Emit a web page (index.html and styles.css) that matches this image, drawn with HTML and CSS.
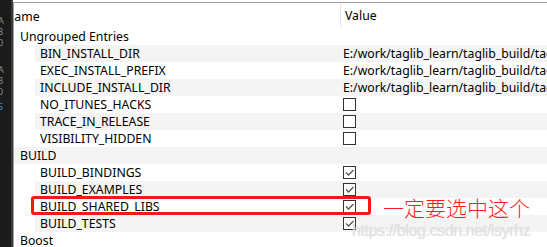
FILE: index.html
```html
<!DOCTYPE html>
<html>
<head>
<meta charset="utf-8">
<link rel="stylesheet" href="styles.css">
</head>
<body>
<div class="app">
  <div class="strip">
    <span class="sg">A</span><span class="sg">8</span><span class="sg">0</span>
    <span class="sg gap">A</span><span class="sg">8</span><span class="sg">0</span>
    <span class="sg blue">S</span>
  </div>
  <div class="panel">
    <div class="head">
      <div class="c1"><span class="nm">Name</span></div>
      <div class="c2">Value</div>
    </div>
    <div class="row group"><div class="c1">Ungrouped Entries</div><div class="c2"></div></div>
    <div class="row child alt"><div class="c1">BIN_INSTALL_DIR</div><div class="c2">E:/work/taglib_learn/taglib_build/taglib</div></div>
    <div class="row child"><div class="c1">EXEC_INSTALL_PREFIX</div><div class="c2">E:/work/taglib_learn/taglib_build/taglib</div></div>
    <div class="row child alt"><div class="c1">INCLUDE_INSTALL_DIR</div><div class="c2">E:/work/taglib_learn/taglib_build/taglib</div></div>
    <div class="row child"><div class="c1">NO_ITUNES_HACKS</div><div class="c2"><span class="cb"></span></div></div>
    <div class="row child alt"><div class="c1">TRACE_IN_RELEASE</div><div class="c2"><span class="cb"></span></div></div>
    <div class="row child"><div class="c1">VISIBILITY_HIDDEN</div><div class="c2"><span class="cb"></span></div></div>
    <div class="row group alt"><div class="c1">BUILD</div><div class="c2"></div></div>
    <div class="row child"><div class="c1">BUILD_BINDINGS</div><div class="c2"><span class="cb on"><svg viewBox="0 0 11 11" width="11" height="11"><path d="M2 5.5 L4.5 8 L9.5 3" fill="none" stroke="#555" stroke-width="1.3"/></svg></span></div></div>
    <div class="row child alt"><div class="c1">BUILD_EXAMPLES</div><div class="c2"><span class="cb on"><svg viewBox="0 0 11 11" width="11" height="11"><path d="M2 5.5 L4.5 8 L9.5 3" fill="none" stroke="#555" stroke-width="1.3"/></svg></span></div></div>
    <div class="row child"><div class="c1">BUILD_SHARED_LIBS</div><div class="c2"><span class="cb on"><svg viewBox="0 0 11 11" width="11" height="11"><path d="M2 5.5 L4.5 8 L9.5 3" fill="none" stroke="#555" stroke-width="1.3"/></svg></span></div></div>
    <div class="row child alt"><div class="c1">BUILD_TESTS</div><div class="c2"><span class="cb on"><svg viewBox="0 0 11 11" width="11" height="11"><path d="M2 5.5 L4.5 8 L9.5 3" fill="none" stroke="#555" stroke-width="1.3"/></svg></span></div></div>
    <div class="row group"><div class="c1">Boost</div><div class="c2"></div></div>
  </div>
</div>
<div class="mark"></div>
<div class="note">一定要选中这个</div>
<div class="wm">https://blog.csdn.net/lsyrhz</div>
</body>
</html>
```
FILE: styles.css
```css
html, body {
  margin: 0;
  padding: 0;
}
body {
  width: 547px;
  height: 247px;
  overflow: hidden;
  background: #fff;
  position: relative;
  font-family: "Noto Sans", "Noto Sans CJK SC", sans-serif;
  font-size: 12.25px;
  color: #000;
}
.app {
  display: flex;
  height: 247px;
}
.strip {
  width: 11px;
  flex: none;
  background: #1b1b1b;
  border-right: 2px solid #3a3a3a;
  display: flex;
  flex-direction: column;
  align-items: flex-start;
  padding-top: 15px;
  overflow: hidden;
}
.sg {
  display: block;
  font-size: 9px;
  line-height: 11px;
  height: 11px;
  color: #8a8a8a;
  margin-left: -2px;
}
.sg.gap { margin-top: 16px; }
.sg.blue { color: #3b8ed8; margin-top: 4px; }
.panel {
  flex: 1;
  margin-top: 2px;
  border-top: 1px solid #a0a0a0;
  border-left: 1px solid #a0a0a0;
  overflow: hidden;
  min-width: 0;
}
.head {
  display: flex;
  height: 25px;
  align-items: center;
}
.head .c1 {
  overflow: hidden;
  white-space: nowrap;
}
.nm {
  display: inline-block;
  margin-left: -9px;
  margin-top: 1px;
}
.head .c2 {
  border-left: 1px solid #e5e5e5;
  height: 24px;
  align-self: flex-start;
  display: flex;
  align-items: center;
  padding-left: 4px;
  padding-top: 1px;
  box-sizing: border-box;
}
.c1 {
  width: 326px;
  flex: none;
  white-space: nowrap;
  overflow: hidden;
}
.c2 {
  flex: 1;
  white-space: nowrap;
  overflow: hidden;
  padding-left: 3px;
}
.row {
  display: flex;
  height: 17px;
  align-items: center;
  line-height: 17px;
}
.row.group .c1 { padding-left: 6px; box-sizing: border-box; }
.row.child { margin-left: 21px; }
.row.child .c1 { width: 305px; padding-left: 5px; box-sizing: border-box; }
.row.child .c2 { padding-left: 3px; }
.row.alt { background: #f4f4f4; }
.cb {
  display: inline-block;
  width: 11px;
  height: 11px;
  border: 1px solid #333;
  background: #fff;
  vertical-align: middle;
  margin-top: -2px;
}
.cb svg { display: block; }
.mark {
  position: absolute;
  left: 31px;
  top: 196px;
  width: 334px;
  height: 13px;
  border: 3px solid #f01a10;
  border-radius: 3px;
}
.note {
  position: absolute;
  left: 383px;
  top: 194px;
  font-family: "Noto Sans CJK SC", sans-serif;
  font-weight: 300;
  font-size: 21px;
  line-height: 26px;
  color: #ff1a1a;
}
.wm {
  position: absolute;
  left: 352px;
  top: 221px;
  font-family: "Liberation Sans", Arial, sans-serif;
  font-size: 16px;
  letter-spacing: -0.4px;
  line-height: 20px;
  color: rgba(225, 225, 225, 0.8);
  text-shadow: 0 0 1px rgba(200,200,200,0.5);
}
```
